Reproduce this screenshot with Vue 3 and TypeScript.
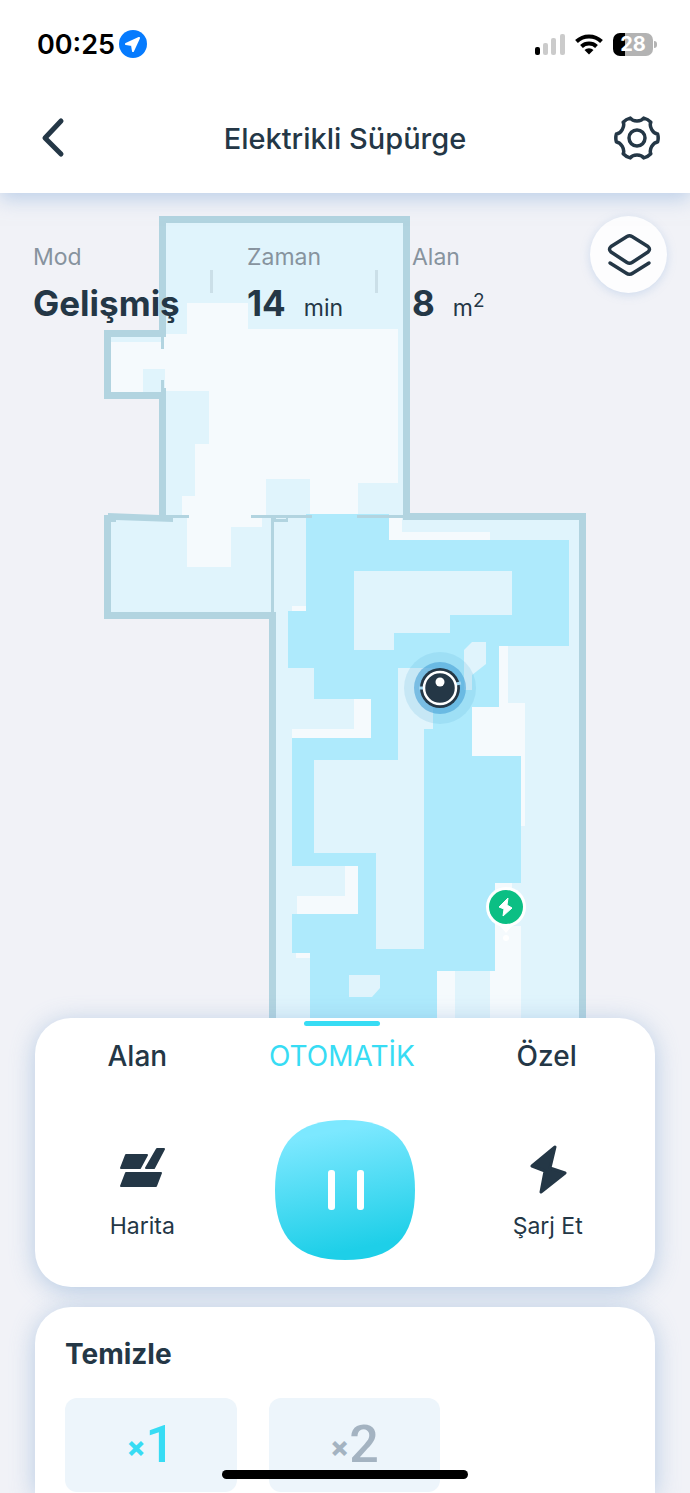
<script setup lang="ts">
import { ref } from 'vue'

type TabId = 'area' | 'auto' | 'custom'

const tabs: { id: TabId; label: string }[] = [
  { id: 'area', label: 'Alan' },
  { id: 'auto', label: 'OTOMATİK' },
  { id: 'custom', label: 'Özel' },
]
const activeTab = ref<TabId>('auto')

const passes = [1, 2]
const activePass = ref(1)

const floor = [
  'M166 223h237v293h-237z',
  'M111 337h50v55h-50z',
  'M111 518h160v94h-160z',
  'M274 518h305v502h-305z',
].join('')

const visited = [
  'M166 334H187V303H248V329H398V483H358V516H310V479H266V516H262V527H231V567H187V516H182V496H195V444H209V391H164V392H111V342H164V337H166z',
  'M389 518h13v14h88v8h-101z',
  'M292 606h14v6h-14z',
  'M499 646H508V703H525V826H520V756H472V707H499z',
  'M354 699h17v39h-79v-9h62z',
  'M345 866h13v48h-61v-18h48z',
  'M296 953h14v5h-14z',
  'M495 883H512V926H521V1020H490V971H495z',
  'M437 971h18v49h-18z',
].join('')

const cleaned = [
  'M306 514H389V540H569V646H499V707H472V756H521V883H495V971H437V1020H310V953H292V914H358V866H292V738H371V699H314V668H288V611H306z',
  'M354 571V650H394V633H450V615H512V571z',
  'M398 668V760H314V853H376V949H424V729H433V668z',
  'M472 642L464 650V690H472V675L486 664V642z',
  'M349 975V997H372L380 988V975z',
].join('')

const walls = [
  'M159 216H410V519H403V223H166V337H164V349H161V337H111V392H161V380H164V388H166V515H189V518H173V522L116 520V522H111V612H271V518H251V515H312V518H288V522H274V612H276V1020H269V619H104V515H108V513L159 515V399H104V330H159z',
  'M357 515h46v3h-46z',
  'M403 513H586V1020H579V520H403z',
].join('')
</script>

<template>
  <div class="page">
    <header class="top">
      <div class="status">
        <div class="clock">
          <span>00:25</span>
          <svg width="28" height="28" viewBox="0 0 28 28" aria-hidden="true">
            <circle cx="14" cy="14" r="14" fill="#067bfe" />
            <path d="M20 8L7 14L13 15L14 21z" fill="#fff" stroke="#fff" stroke-width="2" stroke-linejoin="round" />
          </svg>
        </div>
        <div class="signals">
          <svg width="31" height="22" viewBox="0 0 31 22" aria-hidden="true">
            <rect x="1" y="14" width="5" height="8" rx="2" />
            <g fill="#cbcbcb">
              <rect x="9" y="10" width="5" height="12" rx="2" />
              <rect x="17" y="5" width="5" height="17" rx="2" />
              <rect x="26" y="1" width="5" height="21" rx="2" />
            </g>
          </svg>
          <svg width="28" height="22" viewBox="0 0 28 22" aria-hidden="true">
            <g fill="none" stroke="#000" stroke-width="4">
              <path d="M1.500 8.500A18 18 0 0 1 26.500 8.500" />
              <path d="M6.500 13.500A11 11 0 0 1 21.500 13.500" />
            </g>
            <path d="M9.500 17A6.500 6.500 0 0 1 18.500 17L14 21.500z" />
          </svg>
          <div class="battery"><span>28</span></div>
        </div>
      </div>
      <nav class="nav">
        <button type="button" class="icon-button" aria-label="Geri">
          <svg width="46" height="46" viewBox="0 0 46 46" aria-hidden="true">
            <path d="M31 6L15 23L31 39" fill="none" stroke="#243746" stroke-width="5" stroke-linecap="round" stroke-linejoin="round" />
          </svg>
        </button>
        <h1>Elektrikli Süpürge</h1>
        <button type="button" class="icon-button" aria-label="Ayarlar">
          <svg width="46" height="46" viewBox="-23 -23 46 46" aria-hidden="true">
            <g fill="none" stroke="#243746" stroke-linejoin="round">
              <path
                stroke-width="3.500"
                d="M20.600-4Q21.800 0 20.600 4C15.900 4.500 11.900 11.500 13.800 15.800Q10.900 18.900 6.800 19.900C4 16-4 16-6.800 19.900Q-10.900 18.900-13.800 15.800C-11.900 11.500-15.900 4.500-20.600 4Q-21.800 0-20.600-4C-15.900-4.500-11.900-11.500-13.800-15.800Q-10.900-18.900-6.800-19.900C-4-16 4-16 6.800-19.900Q10.900-18.900 13.800-15.800C11.900-11.500 15.900-4.500 20.600-4z"
              />
              <circle r="8" stroke-width="3.500" />
            </g>
          </svg>
        </button>
      </nav>
    </header>

    <main>
      <section class="map" aria-label="Harita görünümü">
        <svg class="plan" viewBox="0 193 690 825" aria-hidden="true">
          <path :d="floor" fill="#e0f4fc" />
          <path :d="visited" fill="#f5fafd" />
          <path d="M143 369h22v23h-22z" fill="#e0f4fc" />
          <path :d="cleaned" fill="#aeeafc" />
          <path :d="walls" fill="#b2d4e0" />
          <path d="M276 518h10v1h-10z" fill="#e0f4fc" />

          <g transform="translate(440 688)">
            <circle r="36" fill="#5fb2dc" fill-opacity=".2" />
            <circle r="26" fill="#4aa3d8" fill-opacity=".62" />
            <circle r="20" fill="#243746" />
            <path d="M-21 0h5M16-4l5-1" stroke="#9ed4ef" stroke-width="3" />
            <circle r="16" fill="#243746" stroke="#fff" stroke-width="2.500" />
            <circle cy="-6" r="4.500" fill="#fff" />
          </g>

          <g transform="translate(506 907)">
            <path d="M-6 19L0 26L6 19z" fill="#fff" />
            <circle cy="31" r="3" fill="#fff" />
            <circle r="20" fill="#fff" />
            <circle r="17" fill="#0bbf84" />
            <path d="M2-9L1-2L6 1L-3 9L-2 2L-7 0z" fill="#fff" stroke="#fff" stroke-linejoin="round" />
          </g>
        </svg>

        <div class="overlay">
          <dl class="stats">
            <div>
              <dt>Mod</dt>
              <dd><strong>Gelişmiş</strong></dd>
            </div>
            <div class="split">
              <dt>Zaman</dt>
              <dd><strong>14</strong><span>min</span></dd>
            </div>
            <div class="split">
              <dt>Alan</dt>
              <dd><strong>8</strong><span>m<sup>2</sup></span></dd>
            </div>
          </dl>
          <button type="button" class="layers" aria-label="Katmanlar">
            <svg width="48" height="46" viewBox="0 0 48 46" aria-hidden="true">
              <g fill="none" stroke="#243746" stroke-width="3.500" stroke-linecap="round" stroke-linejoin="round">
                <path d="M22 4.500Q24.500 3 27 4.500L43 14.500Q46 17 43 20L27 30.500Q24.500 32 22 30.500L6 20Q3 17 6 14.500z" />
                <path d="M5 31L21 41Q24.500 43.500 28 41L44 31" />
              </g>
            </svg>
          </button>
        </div>
      </section>

      <section class="card controls">
        <div class="tabs" role="tablist">
          <button
            v-for="tab in tabs"
            :key="tab.id"
            type="button"
            role="tab"
            class="tab"
            :class="{ active: tab.id === activeTab }"
            :aria-selected="tab.id === activeTab"
            @click="activeTab = tab.id"
          >
            {{ tab.label }}
          </button>
        </div>
        <div class="actions">
          <button type="button" class="action">
            <svg width="50" height="50" viewBox="0 0 50 50" aria-hidden="true">
              <g fill="#243746" stroke="#243746" stroke-width="2" stroke-linejoin="round">
                <path d="M9 11H30L23 24H4z" />
                <path d="M40 5H47L37 24H29z" />
                <path d="M9 29H44L39 42H4z" />
              </g>
            </svg>
            <span>Harita</span>
          </button>
          <button type="button" class="pause" aria-label="Duraklat">
            <svg width="140" height="140" viewBox="0 0 140 140" aria-hidden="true">
              <defs>
                <linearGradient id="pauseFill" x1=".4" y1="0" x2=".6" y2="1">
                  <stop offset=".08" stop-color="#7ce8ff" />
                  <stop offset=".92" stop-color="#1ecfe8" />
                </linearGradient>
              </defs>
              <path d="M70 0C118 0 140 22 140 70C140 118 118 140 70 140C22 140 0 118 0 70C0 22 22 0 70 0z" fill="url(#pauseFill)" />
              <g fill="#fff">
                <rect x="53" y="50" width="7" height="40" rx="3" />
                <rect x="82" y="50" width="7" height="40" rx="3" />
              </g>
            </svg>
          </button>
          <button type="button" class="action">
            <svg width="50" height="50" viewBox="0 0 50 50" aria-hidden="true">
              <path d="M32 3L27 24L42 29L18 48L22 27L9 22z" fill="#243746" stroke="#243746" stroke-width="3" stroke-linejoin="round" />
            </svg>
            <span>Şarj Et</span>
          </button>
        </div>
      </section>

      <section class="card clean">
        <h2>Temizle</h2>
        <div class="options">
          <button
            v-for="count in passes"
            :key="count"
            type="button"
            class="option"
            :class="{ active: count === activePass }"
            :aria-pressed="count === activePass"
            @click="activePass = count"
          >
            <span class="times">×</span><span>{{ count }}</span>
          </button>
        </div>
      </section>
    </main>
    <div class="home-bar"></div>
  </div>
</template>

<style>
body {
  margin: 0;
  background: #f1f2f7;
}
</style>

<style scoped>
.page {
  min-height: 100vh;
  overflow: hidden;
  background: #f1f2f7;
  color: #243746;
  font-family: Inter, "Noto Sans", sans-serif;
}

button {
  padding: 0;
  border: 0;
  background: none;
  color: inherit;
  font: inherit;
  cursor: pointer;
}

svg {
  display: block;
}

.top {
  position: relative;
  z-index: 1;
  background: #fff;
  box-shadow: 0 6px 18px rgba(140, 175, 220, 0.5);
}

.status {
  display: flex;
  align-items: center;
  justify-content: space-between;
  height: 88px;
  padding: 0 33px 0 37px;
  color: #000;
}

.clock,
.signals {
  display: flex;
  align-items: center;
}

.clock {
  gap: 4px;
  font-size: 27px;
  font-weight: 600;
}

.signals {
  gap: 10px;
}

.battery {
  position: relative;
  width: 40px;
  margin-right: 4px;
  border-radius: 7px;
  background: linear-gradient(90deg, #000 12px, #b3b3b3 12px);
  color: #fff;
  font-size: 20px;
  font-weight: 700;
  line-height: 23px;
  text-align: center;
}

.battery::after {
  content: "";
  position: absolute;
  top: 8px;
  right: -4px;
  width: 3px;
  height: 7px;
  border-radius: 0 3px 3px 0;
  background: #b3b3b3;
}

.nav {
  display: flex;
  align-items: center;
  justify-content: space-between;
  height: 105px;
  padding: 0 30px;
}

.icon-button {
  height: 46px;
  margin-bottom: 5px;
}

h1 {
  margin: 0 0 5px;
  font-size: 29px;
  font-weight: 500;
}

.map {
  position: relative;
}

.plan {
  width: 100%;
  height: auto;
}

.overlay {
  position: absolute;
  inset: 0;
  display: flex;
  align-items: flex-start;
  justify-content: space-between;
  padding: 23px 23px 0 33px;
}

.stats {
  display: grid;
  grid-template-columns: 177px 165px 1fr;
  margin: 27px 0 0;
}

.split {
  position: relative;
  padding-left: 37px;
}

.split::before {
  content: "";
  position: absolute;
  top: 27px;
  left: 0;
  width: 3px;
  height: 23px;
  background: #cbdfe8;
}

dt {
  margin-bottom: 9px;
  color: #87939e;
  font-size: 23px;
  line-height: 28px;
}

dd {
  margin: 0;
  font-size: 23px;
  line-height: 46px;
  white-space: nowrap;
}

dd strong {
  font-size: 35px;
  font-weight: 700;
}

dd span {
  margin-left: 18px;
}

sup {
  font-size: 19px;
  line-height: 0;
}

.layers {
  display: grid;
  place-items: center;
  width: 77px;
  height: 77px;
  border-radius: 50%;
  background: #fdfdfe;
  box-shadow: 0 2px 10px rgba(140, 175, 220, 0.35);
}

.card {
  position: relative;
  margin: 0 35px;
  border-radius: 36px;
  background: #fff;
  box-shadow: 0 4px 24px rgba(110, 155, 205, 0.45);
}

.controls {
  padding-bottom: 27px;
}

.tabs {
  display: grid;
  grid-template-columns: repeat(3, 1fr);
  padding-right: 6px;
}

.tab {
  position: relative;
  padding-top: 20px;
  font-size: 28px;
  font-weight: 500;
  line-height: 36px;
}

.tab.active {
  color: #37dcf4;
  font-weight: 400;
}

.tab.active::before {
  content: "";
  position: absolute;
  top: 3px;
  left: 50%;
  width: 76px;
  height: 5px;
  margin-left: -38px;
  border-radius: 3px;
  background: #37dcf4;
}

.actions {
  display: grid;
  grid-template-columns: repeat(3, 1fr);
  justify-items: center;
  align-items: start;
  margin-top: 46px;
  padding: 0 6px;
}

.action {
  display: flex;
  flex-direction: column;
  align-items: center;
  gap: 16px;
  margin-top: 24px;
  font-size: 23px;
  line-height: 32px;
}

.clean {
  margin-top: 20px;
  padding: 29px 30px 1px;
  border-radius: 36px 36px 0 0;
}

h2 {
  margin: 0 0 26px;
  font-size: 28px;
  font-weight: 700;
  line-height: 36px;
}

.options {
  display: grid;
  grid-template-columns: repeat(2, 1fr);
  gap: 32px;
  width: 67%;
}

.option {
  display: flex;
  align-items: center;
  justify-content: center;
  height: 94px;
  border-radius: 12px;
  background: #edf5fb;
  color: #a4b3c1;
  font-family: Roboto, Inter, sans-serif;
  font-size: 52px;
  font-weight: 500;
  line-height: 60px;
}

.option.active {
  color: #37dcf4;
}

.times {
  padding-top: 4px;
  font-family: Inter, sans-serif;
  font-size: 28px;
  font-weight: 800;
}

.home-bar {
  position: fixed;
  bottom: 14px;
  left: 50%;
  width: 246px;
  height: 9px;
  margin-left: -123px;
  border-radius: 5px;
  background: #000;
}
</style>
